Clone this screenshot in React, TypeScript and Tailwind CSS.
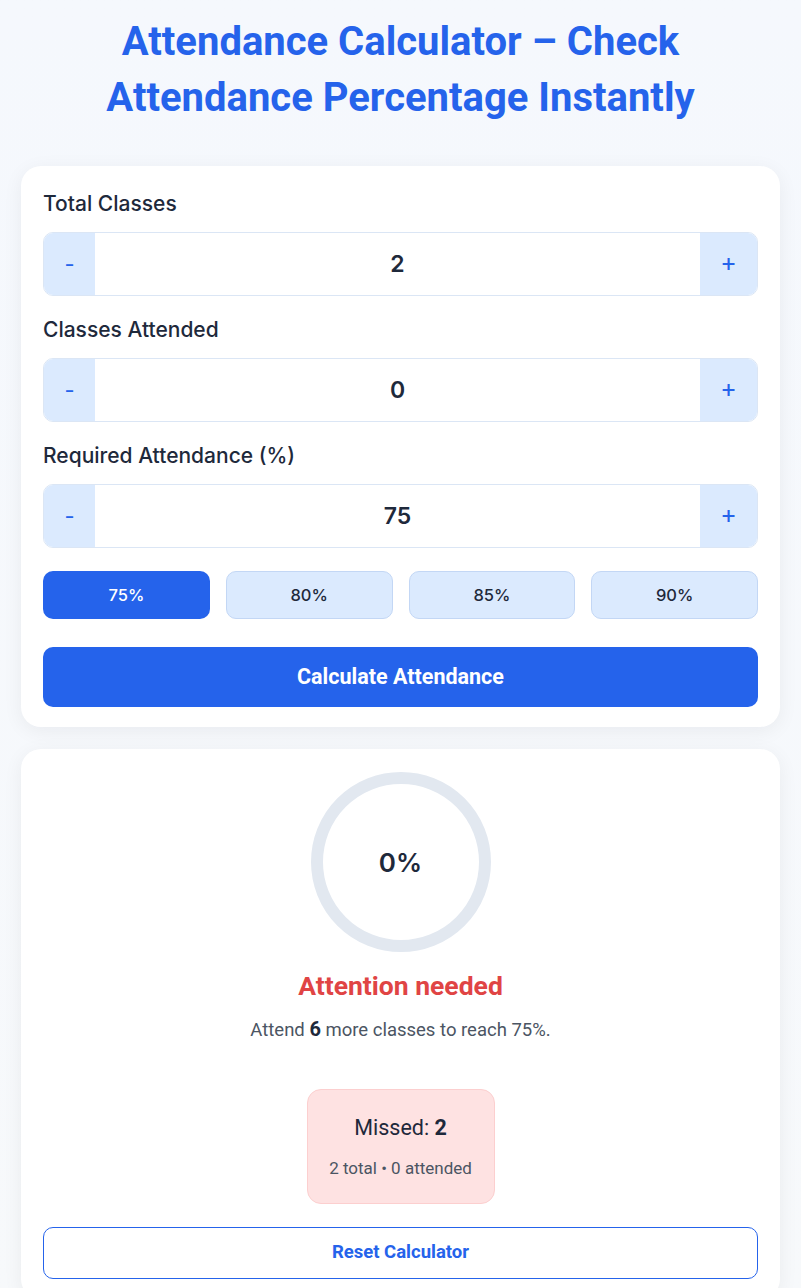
import React, { useState } from 'react';

const presets = [75, 80, 85, 90];

const Stepper: React.FC<{ label: string; value: number; onChange: (v: number) => void }> = ({ label, value, onChange }) => (
    <div className="flex flex-col">
        <label className="text-[21px] leading-[28px] font-medium text-[#1e293b] mb-[14px] font-['Inter',sans-serif]">{label}</label>
        <div className="flex h-[64px] rounded-[10px] border border-[#dbe6f5] overflow-hidden bg-white">
            <button onClick={() => onChange(Math.max(0, value - 1))} className="w-[51px] bg-[#dbeafe] text-[#2563eb] text-[22px] leading-none font-['Inter',sans-serif]">-</button>
            <div className="flex-1 flex items-center justify-center text-[23px] font-semibold text-[#1e293b] font-['Inter',sans-serif]">{value}</div>
            <button onClick={() => onChange(value + 1)} className="w-[57px] bg-[#dbeafe] text-[#2563eb] text-[25px] leading-none pb-[4px] font-['Inter',sans-serif]">+</button>
        </div>
    </div>
);

export default function App() {
    const [total, setTotal] = useState(2);
    const [attended, setAttended] = useState(0);
    const [required, setRequired] = useState(75);

    return (
        <div className="min-h-screen bg-gradient-to-b from-[#f5f8fd] to-[#f7f9fb] px-[21px] pt-[14px] pb-6 font-['Roboto',sans-serif]">
            <h1 className="text-center text-[40px] leading-[56px] font-bold text-[#2563eb] mb-[40px]">
                Attendance Calculator – Check<br />Attendance Percentage Instantly
            </h1>

            <div className="bg-white rounded-[20px] shadow-[0_4px_20px_rgba(15,23,42,0.06)] px-[22px] pt-[24px] pb-[20px]">
                <div className="flex flex-col gap-[20px]">
                    <Stepper label="Total Classes" value={total} onChange={setTotal} />
                    <Stepper label="Classes Attended" value={attended} onChange={setAttended} />
                    <Stepper label="Required Attendance (%)" value={required} onChange={setRequired} />
                </div>
                <div className="grid grid-cols-4 gap-[16px] mt-[23px]">
                    {presets.map(p => (
                        <button
                            key={p}
                            onClick={() => setRequired(p)}
                            className={
                                p === required
                                    ? 'h-[48px] rounded-[10px] bg-[#2563eb] text-white text-[16.5px] font-medium font-[\'Inter\',sans-serif]'
                                    : 'h-[48px] rounded-[10px] bg-[#dbeafe] border border-[#c3d7f5] text-[#1e293b] text-[16.5px] font-medium font-[\'Inter\',sans-serif]'
                            }
                        >
                            {p}%
                        </button>
                    ))}
                </div>
                <button className="mt-[28px] w-full h-[60px] rounded-[10px] bg-[#2563eb] text-white text-[21.5px] font-bold">
                    Calculate Attendance
                </button>
            </div>

            <div className="mt-[22px] bg-white rounded-[20px] shadow-[0_4px_20px_rgba(15,23,42,0.06)] px-[22px] pt-[23px] pb-[20px] flex flex-col items-center">
                <div className="relative w-[180px] h-[180px]">
                    <svg width="180" height="180" viewBox="0 0 180 180">
                        <circle cx="90" cy="90" r="84" fill="none" stroke="#e2e8f0" strokeWidth="12" />
                    </svg>
                    <div className="absolute inset-0 flex items-center justify-center text-[26px] font-semibold text-[#1e293b] font-['Inter',sans-serif]">0%</div>
                </div>
                <div className="mt-[18px] text-[26.5px] leading-[32px] font-bold text-[#e04444]">Attention needed</div>
                <p className="mt-[14px] text-[18.5px] leading-[26px] text-[#4b5563]">
                    Attend <span className="font-bold text-[#1e293b] text-[20px]">6</span> more classes to reach 75%.
                </p>
                <div className="mt-[46px] w-[188px] h-[115px] rounded-[14px] bg-[#fee2e2] border border-[#fccfcf] flex flex-col items-center pt-[24px]">
                    <div className="text-[21.5px] leading-[28px] text-[#1e293b]">Missed: <span className="font-bold">2</span></div>
                    <div className="mt-[16px] text-[17px] leading-[20px] text-[#4b5563]">2 total • 0 attended</div>
                </div>
                <button className="mt-[23px] w-full h-[52px] rounded-[10px] border border-[#2563eb] bg-white text-[#2563eb] text-[18.5px] font-bold">
                    Reset Calculator
                </button>
            </div>
        </div>
    );
}
